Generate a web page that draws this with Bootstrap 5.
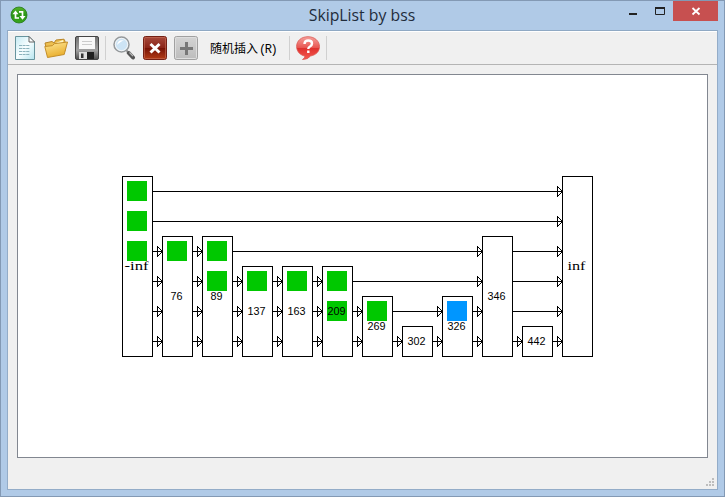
<!DOCTYPE html>
<html lang="zh-CN">
<head>
<meta charset="utf-8">
<meta name="viewport" content="width=device-width, initial-scale=1">
<title>SkipList by bss</title>
<link rel="stylesheet" href="https://cdn.jsdelivr.net/npm/bootstrap@5.3.0/dist/css/bootstrap.min.css">
<style>
body{font-family:"Liberation Sans","Noto Sans CJK SC",sans-serif}
.app-window{height:100vh;background:#b0cae7;border:1px solid #8399b4;padding:0 6px 6px}
.title-bar{height:29px;flex:none}
.title-logo{margin:5px 0 0 3px;width:18px;height:18px}
.title-text{font:15.8px/29px "Open Sans",sans-serif;color:#1f2c3b;white-space:nowrap;padding-left:67px}
.win-btn{background:none;border:0;padding:0;height:20px;display:block}
.win-close{width:45px;background:#c75050}
.client{background:#f0f0f0;border:1px solid #93acc8;border-top-color:#8fa9c4}
.tool-bar{height:34px;border-top:1px solid #fff;border-bottom:1px solid #b4b4b4;flex:none}
.tool-btn{background:none;border:0;padding:0;width:24px;height:24px;line-height:0}
.tool-sep{width:1px;height:24px;background:#d0d0d0}
.tool-label{background:none;border:0;padding:0;font:12px/24px "Noto Sans CJK SC",sans-serif;color:#000;white-space:nowrap}
.tool-label span{font:12px "Liberation Mono",monospace;letter-spacing:-1.4px}
.canvas-frame{margin:9px 9px 0;height:384px;border:1px solid #828790;background:#fff;flex:none}
.lbl{font:11px "Liberation Sans",sans-serif}
.lbl-inf{font:12.5px "Liberation Serif",serif}
svg{display:block}
</style>
<script src="https://cdn.jsdelivr.net/npm/bootstrap@5.3.0/dist/js/bootstrap.bundle.min.js"></script>
</head>
<body class="overflow-hidden">
<div class="app-window d-flex flex-column">
  <header class="title-bar d-flex">
    <svg class="title-logo" viewBox="0 0 18 18"><defs><linearGradient id="gl" x2="0" y2="1"><stop stop-color="#58b52c"/><stop offset=".5" stop-color="#289414"/><stop offset="1" stop-color="#3ca71c"/></linearGradient></defs><circle cx="9" cy="9" r="8" fill="url(#gl)" stroke="#23781a" stroke-width=".8"/><path d="M5.500 7v5h3.500M9 5.800h3.500V11" fill="none" stroke="#fff" stroke-width="1.700"/><path d="M2.500 8.200l3-3.700 3 3.700zM9.500 10l3 3.700 3-3.700z" fill="#fff"/></svg>
    <div class="title-text flex-grow-1 text-center">SkipList by bss</div>
    <div class="d-flex">
      <button class="win-btn" aria-label="Minimize"><svg width="26" height="20"><path d="M0 12h8v2H0z" fill="#222"/></svg></button>
      <button class="win-btn" aria-label="Maximize"><svg width="18" height="20"><path d="M.5 6.500h9v7h-9z" fill="none" stroke="#222"/><path d="M0 6h10v2H0z" fill="#222"/></svg></button>
      <button class="win-btn win-close" aria-label="Close"><svg width="45" height="20"><path d="M19.500 7l7 6.500M26.500 7l-7 6.500" stroke="#fff" stroke-width="1.8"/></svg></button>
    </div>
  </header>
  <main class="client flex-grow-1 d-flex flex-column">
    <div class="tool-bar d-flex align-items-center">
      <button class="tool-btn" style="margin-left:5px" aria-label="New"><svg width="24" height="24"><defs><linearGradient id="pg" x2="1" y2="1"><stop stop-color="#c4eaf3"/><stop offset=".5" stop-color="#f8feff"/><stop offset="1" stop-color="#b5e4ef"/></linearGradient></defs><path d="M2.500.5H16l5.500 5.500v17.500h-19z" fill="url(#pg)" stroke="#68949e"/><path d="M16 .5V6h5.500z" fill="#fff" stroke="#555" stroke-width=".9"/><path d="M6 9.500h11M6 12.500h11M6 15.500h11M6 18.500h11" stroke="#8cb3bd" stroke-dasharray="3 .6"/></svg></button>
      <button class="tool-btn" style="margin-left:7px" aria-label="Open"><svg width="24" height="24"><defs><linearGradient id="fo" x2=".4" y2="1"><stop stop-color="#ffe99a"/><stop offset="1" stop-color="#e9ae2c"/></linearGradient></defs><path d="M1 7l7-1.500 2 1.500 2-3 8-.8 1 2v10L4 20z" fill="#edbf50" stroke="#b98526"/><path d="M12 7l7-3 1 6" fill="#fff7cb"/><path d="M3.500 21.500L.8 10.500l7.500-.8 2-2L23.500 6l-3.300 12.500z" fill="url(#fo)" stroke="#c48f2a"/></svg></button>
      <button class="tool-btn" style="margin-left:7px" aria-label="Save"><svg width="24" height="24"><defs><linearGradient id="fl" x2="0" y2="1"><stop stop-color="#737373"/><stop offset=".6" stop-color="#a0a0a0"/><stop offset="1" stop-color="#4e4e4e"/></linearGradient></defs><rect x=".5" y=".5" width="23" height="23" rx="1.500" fill="url(#fl)" stroke="#454545"/><path d="M4 1h16v12H4z" fill="#f8f8f8"/><path d="M7 5.500h10M7 8.500h10" stroke="#ccc"/><path d="M4 16h8v7H4z" fill="#dedede"/><path d="M12 16h7v7h-7z" fill="#202020"/><path d="M6 17.500h2.500V22H6z" fill="#333"/></svg></button>
      <div class="tool-sep" style="margin-left:6px"></div>
      <button class="tool-btn" style="margin-left:6px" aria-label="Find"><svg width="24" height="24"><path d="M14 14l3 3" stroke="#999" stroke-width="2"/><path d="M16.800 17l4.200 4.500" stroke="#555" stroke-width="4" stroke-linecap="round"/><path d="M17.500 16.500l3.500 3.700" stroke="#bbb" stroke-width="1.200"/><circle cx="9.500" cy="8.500" r="7.500" fill="#d3e9f8" stroke="#96999b" stroke-width="1.500"/><circle cx="9.500" cy="8.500" r="6.100" fill="#cde4f5" stroke="#f5f5f5"/><path d="M5 9q1-6 7-4.500Q9 5 5 9" fill="#fff"/></svg></button>
      <button class="tool-btn" style="margin-left:7px" aria-label="Delete"><svg width="24" height="24"><defs><linearGradient id="rd" x2="0" y2="1"><stop stop-color="#a84a3c"/><stop offset=".49" stop-color="#8b2518"/><stop offset=".5" stop-color="#751206"/><stop offset="1" stop-color="#b53d16"/></linearGradient></defs><rect x=".5" y=".5" width="23" height="23" rx="2" fill="url(#rd)" stroke="#742014"/><rect x="1.500" y="1.500" width="21" height="21" rx="1" fill="none" stroke="#c87058" stroke-opacity=".6"/><path d="M7.500 8l9 8.500M16.500 8l-9 8.500" stroke="#fff" stroke-width="3"/></svg></button>
      <button class="tool-btn" style="margin-left:7px" aria-label="Add"><svg width="24" height="24"><defs><linearGradient id="gr" x2="0" y2="1"><stop stop-color="#d4d4d4"/><stop offset="1" stop-color="#bcbcbc"/></linearGradient></defs><rect x=".5" y=".5" width="23" height="23" rx="2" fill="url(#gr)" stroke="#a0a0a0"/><rect x="1.500" y="1.500" width="21" height="21" rx="1" fill="none" stroke="#dedede"/><path d="M12.500 6v13M6 12.500h13" stroke="#777" stroke-width="3"/></svg></button>
      <button class="tool-label" style="margin-left:12px">随机插入<span style="margin-left:1px">(R)</span></button>
      <div class="tool-sep ms-auto"></div>
      <button class="tool-btn" style="margin-left:6px" aria-label="Help"><svg width="24" height="24"><defs><linearGradient id="hp" x2="0" y2="1"><stop stop-color="#f6a09b"/><stop offset=".48" stop-color="#e85752"/><stop offset=".5" stop-color="#df302d"/><stop offset="1" stop-color="#f55a50"/></linearGradient></defs><path d="M12 .7C5 .7.600 5 .600 10.500S5 19.500 9 20q0 2-2.500 3.500Q12 23.500 14.500 20C20 19 23.500 15.500 23.500 10.500S19 .7 12 .7z" fill="url(#hp)" stroke="#da5751" stroke-width=".8"/><path d="M8.500 8q0-3.500 3.700-3.500 3.800 0 3.800 3 0 2-2 3-1.700.8-1.700 2.500M12.300 14.500v2.500" fill="none" stroke="#fff" stroke-width="2.400"/></svg></button>
      <div class="tool-sep" style="margin-left:6px;margin-right:390px"></div>
    </div>
    <div class="canvas-frame"><svg id="diagram" width="689" height="382" viewBox="18 75 689 382" shape-rendering="crispEdges" role="img" aria-label="Skip list"></svg></div>
    <footer class="flex-grow-1 d-flex justify-content-end align-items-end"><svg width="13" height="12"><path d="M8 1h2v2H8zM5 4h2v2H5zM8 4h2v2H8zM2 7h2v2H2zM5 7h2v2H5zM8 7h2v2H8z" fill="#bdbdbd"/></svg></footer>
  </main>
</div>
<script>
// Each tower: label, height in levels, marker colour per level (level 1 is the bottom)
const G = '#00c800', B = '#0096ff';
const towers = [
  ['-inf', 6, {6: G, 5: G, 4: G}], ['76', 4, {4: G}], ['89', 4, {4: G, 3: G}],
  ['137', 3, {3: G}], ['163', 3, {3: G}], ['209', 3, {3: G, 2: G}],
  ['269', 2, {2: G}], ['302', 1, {}], ['326', 2, {2: B}],
  ['346', 4, {}], ['442', 1, {}], ['inf', 6, {}]
];
const bottom = 356, levelY = n => bottom + 15 - 30 * n;
let out = '';
towers.forEach(([label, h, marks], i) => {
  const x = 122 + 40 * i;
  out += `<rect x="${x + .5}" y="${bottom - 30 * h + .5}" width="30" height="${30 * h}" fill="#fff" stroke="#000"/>`;
  for (const n in marks) out += `<rect x="${x + 5}" y="${levelY(n) - 10}" width="20" height="20" fill="${marks[n]}"/>`;
  const isInf = label.endsWith('inf'), w = label.length * 6;
  out += `<text class="${isInf ? 'lbl-inf' : 'lbl'}" x="${x + 14.5 - w / 2}" y="${bottom - 15 * h + 4}" textLength="${w}" lengthAdjust="spacingAndGlyphs">${label}</text>`;
  for (let n = 1; n <= h && i < towers.length - 1; n++) {
    let j = i + 1;
    while (towers[j][1] < n) j++;
    const tip = 122 + 40 * j, y = levelY(n) + .5;
    out += `<path d="M${x + 31} ${y}H${tip}M${tip - 4.5} ${y - 5}v10l5 -5z" fill="none" stroke="#000"/>`;
  }
});
document.getElementById('diagram').innerHTML = out;
</script>
</body>
</html>
